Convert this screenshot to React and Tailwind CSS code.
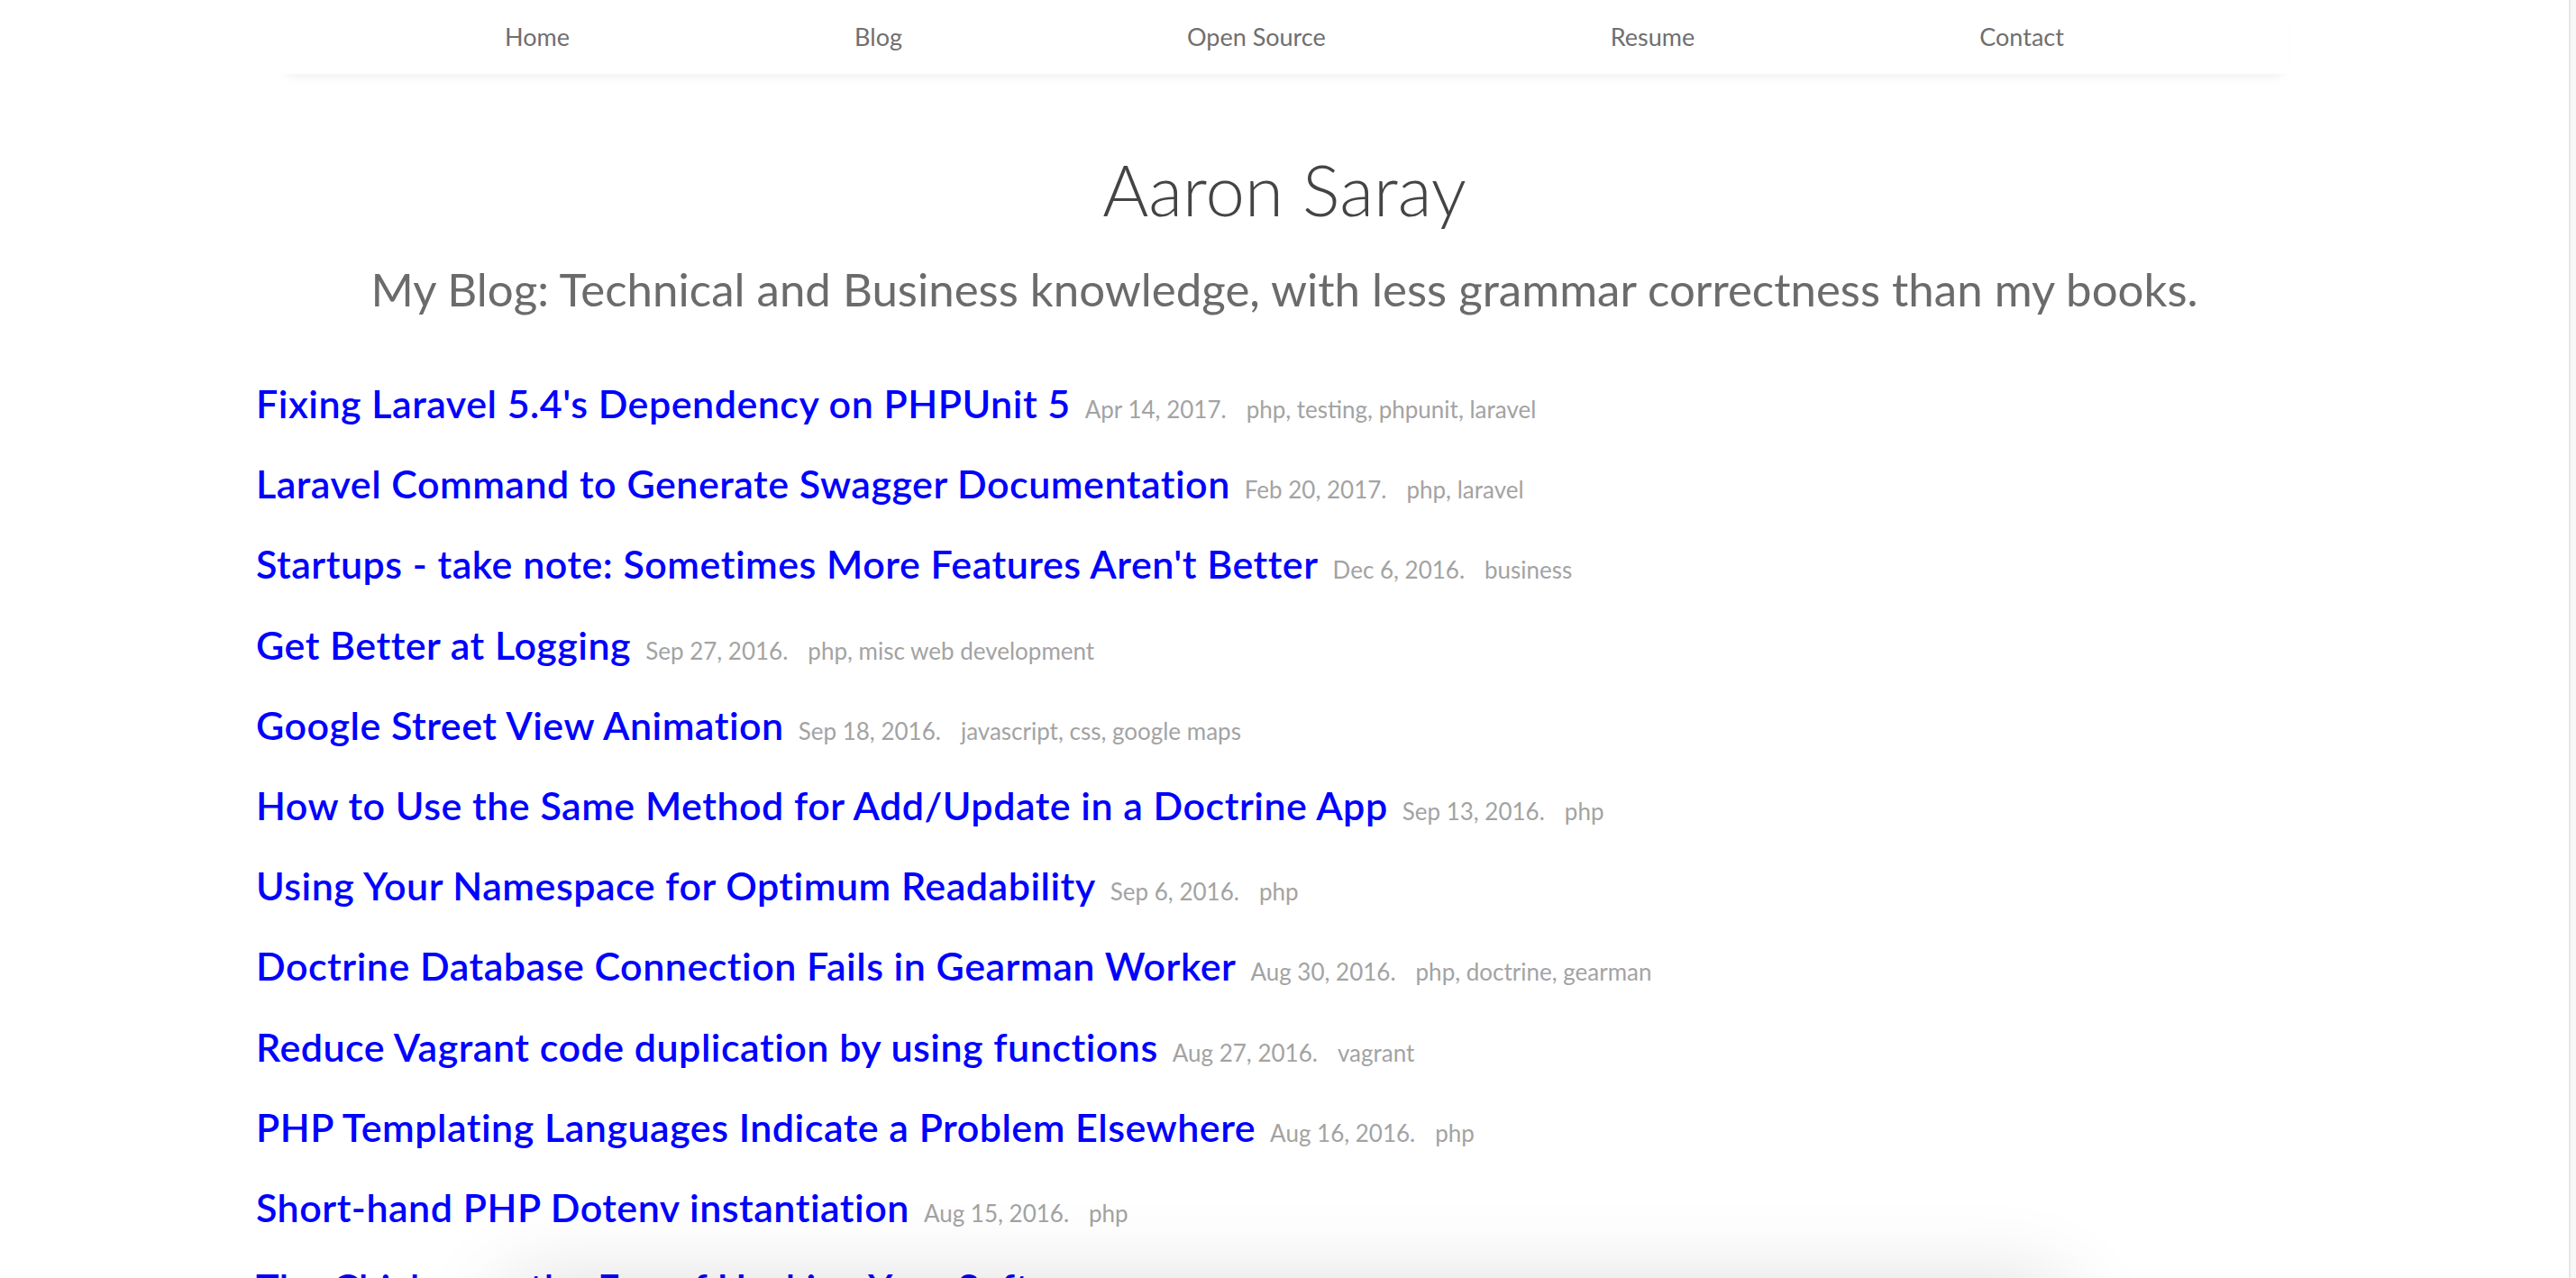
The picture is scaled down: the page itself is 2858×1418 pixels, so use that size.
import React from "react";

const navLinks = ["Home", "Blog", "Open Source", "Resume", "Contact"];

const posts = [
  { title: "Fixing Laravel 5.4's Dependency on PHPUnit 5", date: "Apr 14, 2017.", tags: "php, testing, phpunit, laravel" },
  { title: "Laravel Command to Generate Swagger Documentation", date: "Feb 20, 2017.", tags: "php, laravel" },
  { title: "Startups - take note: Sometimes More Features Aren't Better", date: "Dec 6, 2016.", tags: "business" },
  { title: "Get Better at Logging", date: "Sep 27, 2016.", tags: "php, misc web development" },
  { title: "Google Street View Animation", date: "Sep 18, 2016.", tags: "javascript, css, google maps" },
  { title: "How to Use the Same Method for Add/Update in a Doctrine App", date: "Sep 13, 2016.", tags: "php" },
  { title: "Using Your Namespace for Optimum Readability", date: "Sep 6, 2016.", tags: "php" },
  { title: "Doctrine Database Connection Fails in Gearman Worker", date: "Aug 30, 2016.", tags: "php, doctrine, gearman" },
  { title: "Reduce Vagrant code duplication by using functions", date: "Aug 27, 2016.", tags: "vagrant" },
  { title: "PHP Templating Languages Indicate a Problem Elsewhere", date: "Aug 16, 2016.", tags: "php" },
  { title: "Short-hand PHP Dotenv instantiation", date: "Aug 15, 2016.", tags: "php" },
  { title: "The Chicken or the Egg of Hacking Your Software", date: "Aug 9, 2016.", tags: "business" },
  { title: "Vagrant Provisioning with Ansible", date: "Aug 2, 2016.", tags: "vagrant, ansible" },
];

const App = () => {
  return (
    <div className="flex h-screen w-full overflow-hidden bg-white font-['Lato','Open_Sans',sans-serif]">
      {/* page */}
      <div className="relative flex-1 overflow-hidden">
        {/* Nav */}
        <nav className="mx-auto flex h-[82px] w-[2230px] items-center justify-center gap-[316px] bg-white shadow-[0_10px_12px_-8px_rgba(0,0,0,0.07)]">
          {navLinks.map((link) => (
            <a key={link} href="#" className="text-[27px] font-normal text-[#6f6f6f]">
              {link}
            </a>
          ))}
        </nav>

        <main className="mx-auto w-[2282px]">
          {/* Header */}
          <div className="mt-[85px] text-center">
            <h1 className="text-[78px] font-light leading-[86px] text-[#444444]">Aaron Saray</h1>
            <p className="mt-[38px] text-[51px] font-normal leading-[60px] text-[#6b6b6b]">
              My Blog: Technical and Business knowledge, with less grammar correctness than my books.
            </p>
          </div>

          {/* Posts */}
          <ul className="mt-[52px]">
            {posts.map((post) => (
              <li key={post.title} className="h-[89.2px] text-[43px] leading-[89.2px] whitespace-nowrap">
                <a href="#" className="font-semibold tracking-[0.5px] text-[#0000ff]">
                  {post.title}
                </a>
                <span className="ml-[16px] text-[26px] text-[#a3a3a3]">{post.date}</span>
                <span className="ml-[22px] text-[26px] text-[#a3a3a3]">{post.tags}</span>
              </li>
            ))}
          </ul>
        </main>

        {/* shadow of the fixed bar sitting just below the fold */}
        <div className="absolute left-1/2 top-full h-[200px] w-[1760px] -translate-x-1/2 rounded-[60px] bg-white shadow-[0_0_90px_rgba(0,0,0,0.13)]" />
      </div>

      {/* scrollbar track */}
      <div className="h-full w-[8px] border-l-2 border-[#e6e6e6] bg-[#f7f7f7]" />
    </div>
  );
};

export default App;
